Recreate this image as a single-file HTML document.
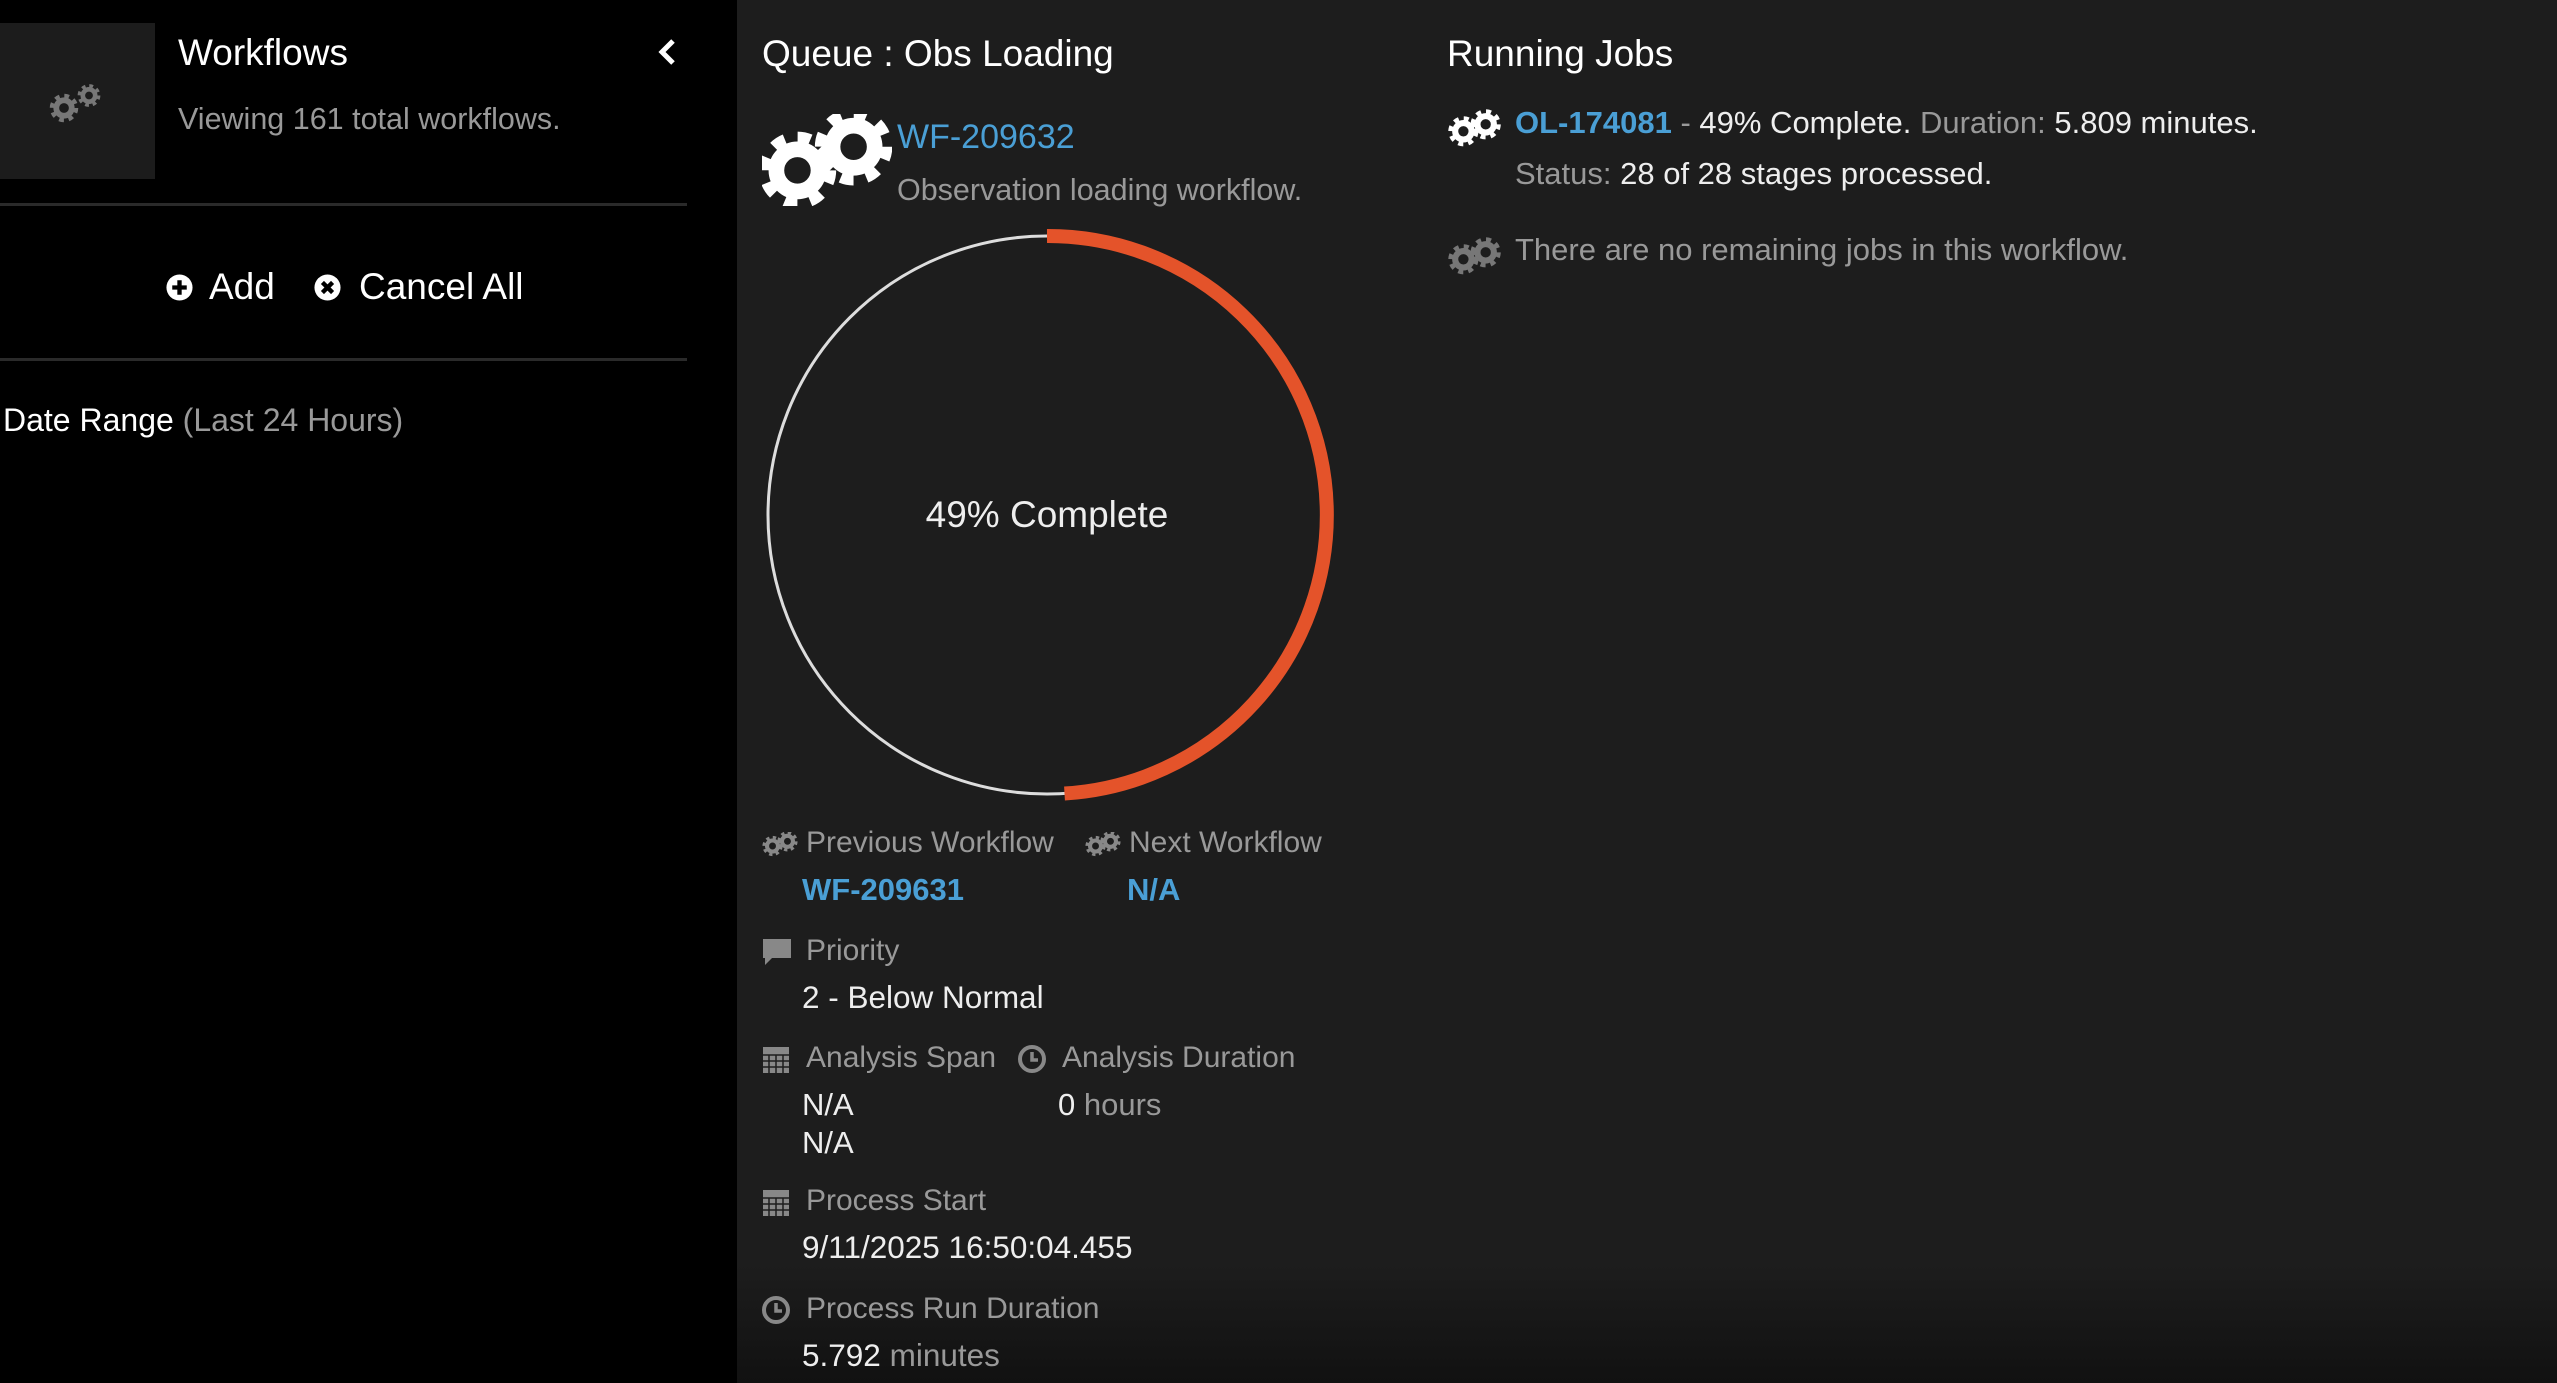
<!DOCTYPE html>
<html><head><meta charset="utf-8">
<style>
*{margin:0;padding:0;box-sizing:border-box}
html,body{width:2557px;height:1383px;overflow:hidden}
body{background:linear-gradient(#1d1d1d 0,#1d1d1d 1265px,#111 1383px);font-family:"Liberation Sans",sans-serif;position:relative;color:#eee}
.t{position:absolute;white-space:nowrap;line-height:1}
.left{position:absolute;left:0;top:0;width:737px;height:1383px;background:#000}
.g{color:#8f8f8f}
.b{color:#4a9fd5}
.hr{position:absolute;left:0;width:687px;height:3px;background:#2a2a2a}
svg{position:absolute}
</style></head><body>
<svg width="0" height="0" style="position:absolute">
<defs>
<g id="gear">
<circle r="9.3" fill="none" stroke-width="4.2" stroke-dasharray="3.65 3.65" stroke="currentColor"/>
<circle r="6.2" fill="none" stroke-width="4.6" stroke="currentColor"/>
</g>
<g id="gears">
<use href="#gear" transform="translate(12,15) scale(0.95)"/>
<use href="#gear" transform="translate(28,10) scale(0.95)"/>
</g>
</defs>
</svg>
<div class="left"></div>
<div style="position:absolute;left:0;top:23px;width:155px;height:156px;background:#1c1c1c"></div>
<svg style="left:45px;top:78px;color:#777" width="68" height="50" viewBox="0 0 40 30"><g transform="translate(2,6) scale(0.75)"><use href="#gear" transform="translate(12,16)"/><use href="#gear" transform="translate(32,6) scale(0.8)"/></g></svg>
<div class="t" style="left:178px;top:34px;font-size:37px;color:#fff">Workflows</div>
<div class="t g" style="left:178px;top:104px;font-size:30.5px;color:#999">Viewing 161 total workflows.</div>
<svg style="left:656px;top:38px" width="22" height="28" viewBox="0 0 22 28"><path d="M17 3 L6 14 L17 25" fill="none" stroke="#fff" stroke-width="5"/></svg>
<div class="hr" style="top:203px"></div>
<svg style="left:165px;top:273px" width="29" height="29" viewBox="0 0 20 20"><circle cx="10" cy="10" r="9" fill="#fff"/><path d="M10 5v10M5 10h10" stroke="#000" stroke-width="3"/></svg>
<div class="t" style="left:209px;top:268px;font-size:37px;color:#fff">Add</div>
<svg style="left:313px;top:273px" width="29" height="29" viewBox="0 0 20 20"><circle cx="10" cy="10" r="9" fill="#fff"/><path d="M6.5 6.5l7 7M13.5 6.5l-7 7" stroke="#000" stroke-width="3"/></svg>
<div class="t" style="left:359px;top:268px;font-size:37px;color:#fff">Cancel All</div>
<div class="hr" style="top:358px"></div>
<div class="t" style="left:3px;top:404px;font-size:32px;color:#fff">Date Range <span style="color:#999">(Last 24 Hours)</span></div>

<div class="t" style="left:762px;top:35px;font-size:37px;color:#fff">Queue : Obs Loading</div>
<svg style="left:762px;top:114px;color:#fff" width="130" height="92" viewBox="0 0 44 31"><use href="#gear" transform="translate(12,19) scale(1.15)"/><use href="#gear" transform="translate(31,11) scale(1.15)"/></svg>
<div class="t b" style="left:897px;top:120px;font-size:34px">WF-209632</div>
<div class="t" style="left:897px;top:175px;font-size:30.5px;color:#999">Observation loading workflow.</div>
<svg style="left:760px;top:228px" width="580" height="580" viewBox="0 0 580 580">
<circle cx="287" cy="287" r="279" fill="none" stroke="#ddd" stroke-width="3"/>
<path d="M287 8 A279 279 0 0 1 304.5 565.5" fill="none" stroke="#e4532a" stroke-width="14"/>
</svg>
<div class="t" style="left:847px;top:496px;width:400px;text-align:center;font-size:37px;color:#eee">49% Complete</div>

<svg style="left:760px;top:832px;color:#888" width="40" height="28" viewBox="0 0 40 30"><use href="#gears"/></svg>
<div class="t" style="left:806px;top:828px;font-size:30px;color:#999">Previous Workflow</div>
<svg style="left:1083px;top:832px;color:#888" width="40" height="28" viewBox="0 0 40 30"><use href="#gears"/></svg>
<div class="t" style="left:1129px;top:828px;font-size:30px;color:#999">Next Workflow</div>
<div class="t b" style="left:802px;top:874px;font-size:31px;font-weight:bold">WF-209631</div>
<div class="t b" style="left:1127px;top:874px;font-size:31px;font-weight:bold">N/A</div>

<svg style="left:762px;top:938px" width="30" height="28" viewBox="0 0 30 28"><path d="M1 1h28v19H10l-7 7v-7H1z" fill="#888"/></svg>
<div class="t" style="left:806px;top:936px;font-size:30px;color:#999">Priority</div>
<div class="t" style="left:802px;top:982px;font-size:31.5px;color:#eee">2 - Below Normal</div>

<svg style="left:762px;top:1044px" width="28" height="30" viewBox="0 0 28 30"><rect x="1" y="3" width="26" height="26" fill="#888"/><path d="M1 11h26M1 17h26M1 23h26M7 11v18M14 11v18M21 11v18" stroke="#1d1d1d" stroke-width="1.5"/></svg>
<div class="t" style="left:806px;top:1043px;font-size:30px;color:#999">Analysis Span</div>
<svg style="left:1017px;top:1044px" width="30" height="30" viewBox="0 0 30 30"><circle cx="15" cy="15" r="12" fill="none" stroke="#888" stroke-width="4"/><path d="M15 8v8h6" fill="none" stroke="#888" stroke-width="3.5"/></svg>
<div class="t" style="left:1062px;top:1043px;font-size:30px;color:#999">Analysis Duration</div>
<div class="t" style="left:802px;top:1089px;font-size:31px;color:#eee">N/A</div>
<div class="t" style="left:1058px;top:1089px;font-size:31px;color:#eee">0 <span style="color:#999">hours</span></div>
<div class="t" style="left:802px;top:1127px;font-size:31px;color:#eee">N/A</div>

<svg style="left:762px;top:1187px" width="28" height="30" viewBox="0 0 28 30"><rect x="1" y="3" width="26" height="26" fill="#888"/><path d="M1 11h26M1 17h26M1 23h26M7 11v18M14 11v18M21 11v18" stroke="#1d1d1d" stroke-width="1.5"/></svg>
<div class="t" style="left:806px;top:1186px;font-size:30px;color:#999">Process Start</div>
<div class="t" style="left:802px;top:1232px;font-size:31.5px;color:#eee">9/11/2025 16:50:04.455</div>

<svg style="left:761px;top:1295px" width="30" height="30" viewBox="0 0 30 30"><circle cx="15" cy="15" r="12" fill="none" stroke="#888" stroke-width="4"/><path d="M15 8v8h6" fill="none" stroke="#888" stroke-width="3.5"/></svg>
<div class="t" style="left:806px;top:1294px;font-size:30px;color:#999">Process Run Duration</div>
<div class="t" style="left:802px;top:1340px;font-size:31.5px;color:#eee">5.792 <span style="color:#999">minutes</span></div>

<div class="t" style="left:1447px;top:35px;font-size:37px;color:#fff">Running Jobs</div>
<svg style="left:1445px;top:106px;color:#fff" width="62" height="44" viewBox="0 0 40 30"><use href="#gears" transform="translate(0,3) scale(0.95)"/></svg>
<div class="t" style="left:1515px;top:107px;font-size:31px;color:#eee"><b class="b">OL-174081</b> <span style="color:#999">-</span> 49% Complete. <span style="color:#999">Duration:</span> 5.809 minutes.</div>
<div class="t" style="left:1515px;top:158px;font-size:31px;color:#eee"><span style="color:#999">Status:</span> 28 of 28 stages processed.</div>
<svg style="left:1445px;top:234px;color:#777" width="62" height="44" viewBox="0 0 40 30"><use href="#gears" transform="translate(0,3) scale(0.95)"/></svg>
<div class="t" style="left:1515px;top:234px;font-size:31px;color:#999">There are no remaining jobs in this workflow.</div>
</body></html>
